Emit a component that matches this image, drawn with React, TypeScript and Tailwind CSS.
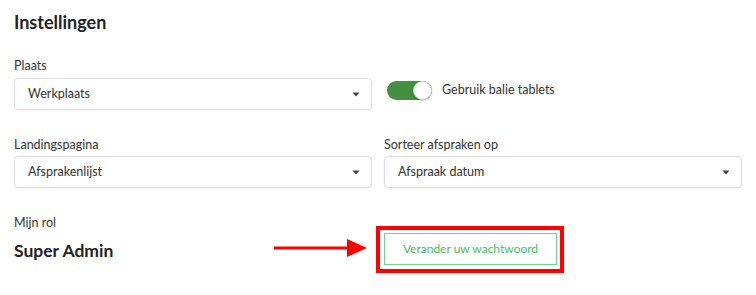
import React from "react";

function Caret() {
  return (
    <svg width="8" height="5" viewBox="0 0 8 5" className="shrink-0">
      <path d="M0.5 0.5 L7.5 0.5 L4 4.5 Z" fill="#444" />
    </svg>
  );
}

function Select({ value }: { value: string }) {
  return (
    <div className="flex h-[32px] items-center justify-between rounded-[4px] border border-[#dedede] bg-white pl-[13px] pr-[11px] shadow-[0_1px_2px_rgba(0,0,0,0.05)]">
      <span className="text-[12.5px] text-[#333]">{value}</span>
      <Caret />
    </div>
  );
}

function Label({ children }: { children: React.ReactNode }) {
  return <div className="text-[12.5px] leading-[16px] text-[#333]">{children}</div>;
}

export default function App() {
  return (
    <div className="h-[295px] w-[756px] bg-white px-[14px] font-['Lato',sans-serif] text-[#222]">
      <h1 className="pt-[8px] text-[18px] font-bold leading-[28px] text-[#222]">Instellingen</h1>

      <div className="mt-[22px] grid grid-cols-2 gap-x-[12px]">
        <div className="flex flex-col gap-[4px]">
          <Label>Plaats</Label>
          <Select value="Werkplaats" />
        </div>
        <div className="flex items-end pb-[10px] pl-[3px]">
          <div className="flex items-center gap-[10px]">
            <div className="relative h-[19px] w-[45px] rounded-full bg-[#43903e]">
              <div className="absolute right-0 top-0 h-[19px] w-[19px] rounded-full border border-[#d8d8d8] bg-white shadow-[0_1px_2px_rgba(0,0,0,0.2)]" />
            </div>
            <span className="text-[12.5px] text-[#333]">Gebruik balie tablets</span>
          </div>
        </div>
      </div>

      <div className="mt-[27px] grid grid-cols-2 gap-x-[12px]">
        <div className="flex flex-col gap-[3px]">
          <Label>Landingspagina</Label>
          <Select value="Afsprakenlijst" />
        </div>
        <div className="flex flex-col gap-[3px]">
          <Label>Sorteer afspraken op</Label>
          <Select value="Afspraak datum" />
        </div>
      </div>

      <div className="mt-[27px] grid grid-cols-2 gap-x-[12px]">
        <div className="flex flex-col">
          <Label>Mijn rol</Label>
          <div className="mt-[2px] flex h-[32px] items-center justify-between pr-[4px]">
            <span className="pt-[4px] text-[17.5px] font-bold text-[#222]">Super Admin</span>
            <svg width="94" height="20" viewBox="0 0 94 20" className="mt-[-2px]">
              <rect x="0" y="8.5" width="75" height="3" fill="#ff0000" />
              <path d="M73 1 L93 10 L73 19 Z" fill="#ff0000" />
            </svg>
          </div>
        </div>
        <div className="pt-[11px]">
          <div className="ml-[-8px] inline-flex border-4 border-[#ff0000] pb-[4px] pl-[4px] pr-[3px] pt-[3px]">
            <div className="flex h-[32px] w-[173px] items-center justify-center border border-[#6fd48a] bg-white text-[12px] text-[#42c165]">
              Verander uw wachtwoord
            </div>
          </div>
        </div>
      </div>
    </div>
  );
}
